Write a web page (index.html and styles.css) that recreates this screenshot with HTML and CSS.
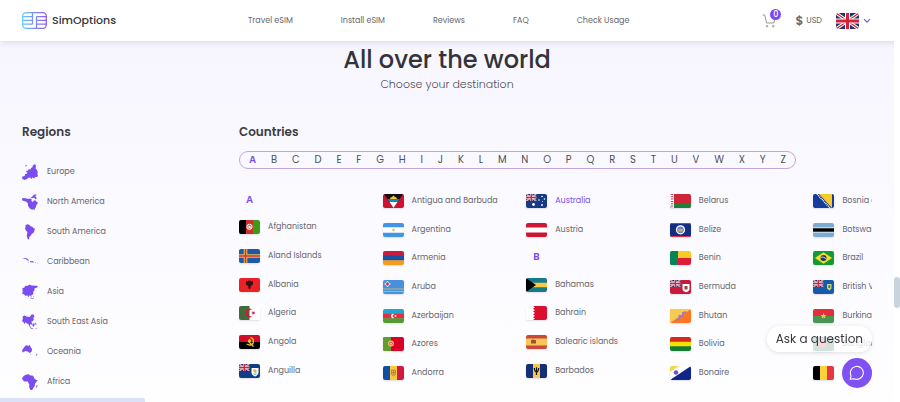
FILE: index.html
```html
<!DOCTYPE html>
<html lang="en">
<head>
    <meta charset="UTF-8">
    <meta name="viewport" content="width=device-width, initial-scale=1.0">
    <title>SimOptions - All over the world</title>
    <link rel="stylesheet" href="styles.css">
</head>
<body>
    <!-- Shared flag parts -->
    <svg class="defs" aria-hidden="true">
        <symbol id="union-jack" viewBox="0 0 60 40" preserveAspectRatio="none">
            <path fill="#26316f" d="M0 0h60v40H0z"/>
            <path stroke="#fff" stroke-width="8" d="M0 0l60 40M60 0L0 40"/>
            <path stroke="#d32238" stroke-width="3" d="M0 0l60 40M60 0L0 40"/>
            <path stroke="#fff" stroke-width="13" d="M30 0v40M0 20h60"/>
            <path stroke="#d32238" stroke-width="8" d="M30 0v40M0 20h60"/>
        </symbol>
    </svg>

    <header class="header">
        <a href="#" class="logo">
            <svg class="logo-icon" viewBox="0 0 25 17" fill="none" stroke="url(#logoGradient)" stroke-width="1.3">
                <defs>
                    <linearGradient id="logoGradient" gradientUnits="userSpaceOnUse" x1="0" y1="0" x2="25" y2="0">
                        <stop offset="0" stop-color="#5fd0f5"/>
                        <stop offset="0.5" stop-color="#7f8df0"/>
                        <stop offset="1" stop-color="#8a5cf0"/>
                    </linearGradient>
                </defs>
                <rect x="0.7" y="0.7" width="23.6" height="15.6" rx="3.5"/>
                <path d="M1 4.6h9.5M1 8.4h9.5M1 12.2h9.5M10.5 1v11.2M14.5 16V4.6M14.5 4.6H24M14.5 8.4H24M14.5 12.2H24"/>
            </svg>
            SimOptions
        </a>

        <nav class="nav">
            <a href="#">Travel eSIM</a>
            <a href="#">Install eSIM</a>
            <a href="#">Reviews</a>
            <a href="#">FAQ</a>
            <a href="#">Check Usage</a>
        </nav>

        <div class="tools">
            <a href="#" class="cart" aria-label="Cart">
                <svg viewBox="0 0 14 14" fill="none" stroke="#999" stroke-width="1">
                    <path d="M0.5 1h2.2l1.9 8h7.2l1.6-6"/>
                    <circle cx="5" cy="12.2" r="0.8"/>
                    <circle cx="11.2" cy="12.2" r="0.8"/>
                </svg>
                <span class="cart-count">0</span>
            </a>
            <button type="button" class="currency"><span class="dollar">$</span>USD</button>
            <button type="button" class="language" aria-label="Language">
                <svg class="language-flag"><use href="#union-jack"/></svg>
                <svg class="chevron" viewBox="0 0 8 6" fill="none" stroke="#7a55e0" stroke-width="1.2"><path d="M1 1.2l3 3 3-3"/></svg>
            </button>
        </div>
    </header>

    <main class="main">
        <h1>All over the world</h1>
        <p class="subtitle">Choose your destination</p>

        <div class="destinations">
            <section class="regions">
                <h2>Regions</h2>
                <ul>
                    <li><a href="#"><svg viewBox="0 0 16 16"><path d="M0 14.500l.4-2 2.300-.6.400-1.800 1.800-.4.600-1.300-1.300-.4.200-1.400 1.200.3L6.800 5l1.600.7.400-1.500 1.500-1L11.400.8l1.800-.6.8 1.800-.4 2.600 1.200 1.200 1 2.300-.4 1.800.6 2.400-1.500.8-1.400-.2-.8 1.700-1.900-1-.8 1.600-1.200-1.600-2.100.1-1.700 1.600-2.400.6zM3.300 1.600l1.400-.5v.9l-1.200.5z"/></svg>Europe</a></li>
                    <li><a href="#"><svg viewBox="0 0 16 16"><path d="M0 6.200L.4 4l2.800.3 3.400.7 1.900-.6 1.300 1-.4 1.500 1.500 1.200.9-1.500 1.500-.4 1 1.200 1.600 1-.6 1.700-.9.8-.6 2.400-1.200 1.600.1 1.300-.9-.7-2.200-.1-1.800-.9-1.700-2.600-.3-2.800-2-1.600L1.800 7zM8.600 3.400l2-1.200 1.200-1.500L14.800.3l-1.500 1.900 1.500 1.800-.9 1.400-2-1.800-1.700.6z"/></svg>North America</a></li>
                    <li><a href="#"><svg viewBox="0 0 16 16"><path d="M3.300 1.400L5.200.3l2.100.5 1.300 1.500 1.800.4.8 1.200 1.800.8-.6 2-1 2.400-1.600.7-.9 1.700-1.200 1-.6 1.300.1 1.700-1.500-.6L4.800 12l.6-4L3.600 6.200 3 4.100l.7-1z"/></svg>South America</a></li>
                    <li><a href="#"><svg viewBox="0 0 16 16"><path d="M0 5l2.400-1.100 2.700.7 2.400 1.800-1.700.1-2.300-1.600-2-.2zM7.800 7.200l2.400-.2 2 1-.8.5-2.900-.3zM13 8.300l1 .1v.5l-1-.1zM15 8.800l.9.3-.4.5zM5.600 7.800l1.200.2-.3.4z"/></svg>Caribbean</a></li>
                    <li><a href="#"><svg viewBox="0 0 16 16"><path d="M.3 4.200l2.200-.8.500-1.600 2.300.2L7.400.4l2.200 1.200 5 .1 1.400.8-1.300 1.300-2 .4-.3 2.400-1.300 1.100.4 1.800-1.200 1.600-1.200.1.700 2-1-.7-.8-1.200-.8.5-.5 1.500-1.200-1.900-2.200.3L1.600 10 .3 10.200.7 7zM8 13.500l2 .6 2 .8-1.500.1-2-.8zM11 11.700l.8 1.400-.7.1z"/></svg>Asia</a></li>
                    <li><a href="#"><svg viewBox="0 0 16 16"><path d="M.7 2.200l2-.8 1.600 1.200 3.200.3L8.700 1.800 9.700.3l1.800.2.900 1.900-1.200 1.500.7 1.600-1 1.500-1.700.7 1.200 2-.8 1-1.100-.7-.6 1 .8 2-1.200-.7-1-2.100L5 9.600 3.700 8.200 2.500 10 1.300 8 0 7l.8-2zM7 12l2.600 2 1.800.6-.1.500-2.200-.3zM10.300 10.500l2-1.500.4 1.800-1 2-1.200-.7zM12.800 8.300l1.300 1 .4 2-.9-.6zM13.200 14l1.800.8-.7.4z"/></svg>South East Asia</a></li>
                    <li><a href="#"><svg viewBox="0 0 16 16"><path d="M0 6.200l1.800-2.400 1.500-2L5.300 1.200l.8 1L7.500.8l1.300 2.700 1.400 1.700-.7 2.500-1.900 1.300-2-1.500-2.200-.6L.8 8.600zM7.700 9.800h1v.9zM14.600 9.600l1 .6-1 1.400-1.200 1 .9-1.600z"/></svg>Oceania</a></li>
                    <li><a href="#"><svg viewBox="0 0 16 16"><path d="M0 4.600L1.600 2 4.400.6 7 .3l.6 1 3.500.4 1.500 3 1.600 1.200h1.400L14 8.600l-1.200 1.500.1 1.900-1.400 1.600-1 2.100-2 .5-1.300-3 .1-2.800-1.100-1.800-.4-1.100-3.500-.1L.4 5.600zM14.800 11l.8.3-.8 2.500-.8-.2z"/></svg>Africa</a></li>
                </ul>
            </section>

            <section class="countries">
                <h2>Countries</h2>
                <div class="alphabet">
                    <button type="button" class="active">A</button><button type="button">B</button><button type="button">C</button><button type="button">D</button><button type="button">E</button><button type="button">F</button><button type="button">G</button><button type="button">H</button><button type="button">I</button><button type="button">J</button><button type="button">K</button><button type="button">L</button><button type="button">M</button><button type="button">N</button><button type="button">O</button><button type="button">P</button><button type="button">Q</button><button type="button">R</button><button type="button">S</button><button type="button">T</button><button type="button">U</button><button type="button">V</button><button type="button">W</button><button type="button">X</button><button type="button">Y</button><button type="button">Z</button>
                </div>

                <div class="list-wrap">
                    <div class="list">
                        <ul class="with-letter">
                            <li class="letter">A</li>
                            <li><a href="#"><svg viewBox="0 0 21 14"><path d="M0 0h7v14H0z"/><path fill="#c8322b" d="M7 0h7v14H7z"/><path fill="#3d9a18" d="M14 0h7v14h-7z"/><circle cx="10.500" cy="6.800" r="2.600" fill="#d66a50" stroke="#fff"/><path fill="#fff" d="M9.500 6h2v2h-2z"/></svg>Afghanistan</a></li>
                            <li><a href="#"><svg viewBox="0 0 21 14"><path fill="#1c5aa8" d="M0 0h21v14H0z"/><path stroke="#f0bd55" stroke-width="3.600" d="M6.500 0v14M0 7h21"/><path stroke="#d0342e" stroke-width="1.600" d="M6.500 0v14M0 7h21"/></svg>Aland Islands</a></li>
                            <li><a href="#"><svg viewBox="0 0 21 14"><path fill="#ec2027" d="M0 0h21v14H0z"/><path fill="#321013" d="M7 3l2 .5.8-1.200.7.800.7-.8.8 1.200L14 3v3.500l-2.500 1.700.3 1.700-1.300 1.300-1.300-1.300.3-1.700L7 6.500z"/></svg>Albania</a></li>
                            <li><a href="#"><svg viewBox="0 0 21 14"><path fill="#fff" d="M0 0h21v14H0z"/><path fill="#456b3b" d="M0 0h10.500v14H0z"/><path fill="#d8173c" d="M13.500 3.800a4.200 4.200 0 1 0 0 6.400 3.400 3.400 0 1 1 0-6.400zM12 7l1.500-.6.200-1.500 1 1.200 1.400-.5-.8 1.300.8 1.300-1.400-.4-1 1.200-.2-1.500z"/></svg>Algeria</a></li>
                            <li><a href="#"><svg viewBox="0 0 21 14"><path fill="#d50c28" d="M0 0h21v7H0z"/><path d="M0 7h21v7H0z"/><path fill="none" stroke="#f3c332" stroke-width="1.300" d="M11.500 2.500c4 1 4 7.500-.8 7.500L7.500 9M9 6l5.500 5.500"/><path fill="#f3c332" d="M10 4l2 1-.3 2-2 .3L9 5.500z"/></svg>Angola</a></li>
                            <li><a href="#"><svg viewBox="0 0 21 14"><path fill="#103d87" d="M0 0h21v14H0z"/><use href="#union-jack" width="10.500" height="7"/><path fill="#fff" d="M12.500 4h7v4.500c0 2-2 3.500-3.500 4-1.500-.5-3.500-2-3.500-4z"/><path fill="#e0b45b" d="M14 6l2-1 2 2-1 2-2-.5z"/><path fill="#72c7dc" d="M13.500 9.500h5l-2.500 2z"/></svg>Anguilla</a></li>
                        </ul>
                        <ul>
                            <li><a href="#"><svg viewBox="0 0 21 14"><path fill="#cc1230" d="M0 0h21v14H0z"/><path fill="#111" d="M1 0h19l-9.500 14z"/><path fill="#f7ca35" d="M7 5l.6-1.500L9 3l1.500-1.500L12 3l1.400.5L14 5z"/><path fill="#1684c5" d="M4.500 5h12l-2 3h-8z"/><path fill="#fff" d="M6.500 8h8l-4 6z"/></svg>Antigua and Barbuda</a></li>
                            <li><a href="#"><svg viewBox="0 0 21 14"><path fill="#4393e6" d="M0 0h21v14H0z"/><path fill="#fff" d="M0 4.300h21v5.400H0z"/><circle cx="10.500" cy="7" r="1.400" fill="#ecc65b"/></svg>Argentina</a></li>
                            <li><a href="#"><svg viewBox="0 0 21 14"><path fill="#c81b3d" d="M0 0h21v5H0z"/><path fill="#1951a6" d="M0 4.700h21v5H0z"/><path fill="#f39b21" d="M0 9.300h21V14H0z"/></svg>Armenia</a></li>
                            <li><a href="#"><svg viewBox="0 0 21 14"><path fill="#4690dc" d="M0 0h21v14H0z"/><path stroke="#bdba72" d="M0 9h21M0 11.500h21"/><path fill="#d7284b" stroke="#fff" stroke-width=".7" d="M4.500 1l1 2 2 1-2 1-1 2-1-2-2-1 2-1z"/></svg>Aruba</a></li>
                            <li><a href="#"><svg viewBox="0 0 21 14"><path fill="#24a4ce" d="M0 0h21v5H0z"/><path fill="#e22f42" d="M0 4.700h21v5H0z"/><path fill="#549b35" d="M0 9.300h21V14H0z"/><path fill="#fff" d="M11.300 5.300a2.100 2.100 0 1 0 0 3.400 1.700 1.700 0 1 1 0-3.400z"/><circle cx="12.500" cy="7" r=".9" fill="#fff"/></svg>Azerbaijan</a></li>
                            <li><a href="#"><svg viewBox="0 0 21 14"><path fill="#d80027" d="M0 0h21v14H0z"/><path fill="#639c35" d="M0 0h8v14H0z"/><circle cx="8" cy="6.500" r="2.400" fill="#d83435" stroke="#edc24f" stroke-width="1.200"/><path fill="#fff" d="M7.300 5.700h1.400v1.800H7.300z"/></svg>Azores</a></li>
                            <li><a href="#"><svg viewBox="0 0 21 14"><path fill="#134da0" d="M0 0h7v14H0z"/><path fill="#f6ca3d" d="M7 0h7v14H7z"/><path fill="#d01b3f" d="M14 0h7v14h-7z"/><path fill="#e9ae58" stroke="#b47839" stroke-width=".8" d="M8.500 4h4v4.500l-2 1.500-2-1.500zM8.500 6.500h4M10.500 4v5"/></svg>Andorra</a></li>
                        </ul>
                        <ul class="with-letter">
                            <li><a href="#" class="current"><svg viewBox="0 0 21 14"><path fill="#173a85" d="M0 0h21v14H0z"/><use href="#union-jack" width="10.500" height="7"/><g fill="#fff"><circle cx="7.500" cy="10.500" r="1.400"/><circle cx="16" cy="2.500" r=".8"/><circle cx="13" cy="6" r=".8"/><circle cx="18.500" cy="5" r=".8"/><circle cx="16.500" cy="7.500" r=".5"/><circle cx="16" cy="11" r=".9"/></g></svg>Australia</a></li>
                            <li><a href="#"><svg viewBox="0 0 21 14"><path fill="#cc1734" d="M0 0h21v14H0z"/><path fill="#fff" d="M0 4.500h21v5H0z"/></svg>Austria</a></li>
                            <li class="letter">B</li>
                            <li><a href="#"><svg viewBox="0 0 21 14"><path fill="#19798b" d="M0 0h21v14H0z"/><path fill="#f8ca45" d="M0 4.700h21v4.600H0z"/><path d="M0 0l10 7-10 7z"/></svg>Bahamas</a></li>
                            <li><a href="#"><svg viewBox="0 0 21 14"><path fill="#fff" d="M0 0h21v14H0z"/><path fill="#da0e2e" d="M21 0H7l2 1.400-2 1.400 2 1.400-2 1.400L9 7 7 8.400l2 1.400-2 1.400 2 1.400L7 14h14z"/></svg>Bahrain</a></li>
                            <li><a href="#"><svg viewBox="0 0 21 14"><path fill="#c9483c" d="M0 0h21v14H0z"/><path fill="#f8c559" d="M0 3.500h21v7H0z"/><path fill="#a44d35" d="M5 5h1l1-1 1 1h2v3.500H5z"/></svg>Balearic islands</a></li>
                            <li><a href="#"><svg viewBox="0 0 21 14"><path fill="#152f77" d="M0 0h21v14H0z"/><path fill="#f9c84a" d="M7 0h7v14H7z"/><path fill="none" stroke="#17110a" stroke-width="1.200" d="M8.300 4c.2 2 .5 4 2.200 4s2-2 2.200-4M10.500 3.300V11"/></svg>Barbados</a></li>
                        </ul>
                        <ul>
                            <li><a href="#"><svg viewBox="0 0 21 14"><path fill="#ce2638" d="M0 0h21v14H0z"/><path fill="#1d8139" d="M0 9h21v5H0z"/><path fill="#fff" d="M0 0h4v14H0z"/><path stroke="#cf3848" stroke-width="2.500" stroke-dasharray="1 1.300" d="M2 0v14"/></svg>Belarus</a></li>
                            <li><a href="#"><svg viewBox="0 0 21 14"><path fill="#172d81" d="M0 0h21v14H0z"/><path stroke="#cf3447" stroke-width="1.200" d="M0 .5h21M0 13.500h21"/><circle cx="10.500" cy="6.800" r="4" fill="#6787c2" stroke="#fff" stroke-width="1.300"/><path fill="#d4ad72" d="M8.500 6h4v2.500h-4z"/></svg>Belize</a></li>
                            <li><a href="#"><svg viewBox="0 0 21 14"><path fill="#f7cb20" d="M0 0h21v7H0z"/><path fill="#dd1c3b" d="M0 7h21v7H0z"/><path fill="#078454" d="M0 0h8v14H0z"/></svg>Benin</a></li>
                            <li><a href="#"><svg viewBox="0 0 21 14"><path fill="#c91a3c" d="M0 0h21v14H0z"/><use href="#union-jack" width="10.500" height="7"/><path fill="#fff" d="M12.500 4h7v5c0 1.500-1.500 2.500-3.500 3.300-2-.8-3.500-1.800-3.500-3.300z"/><path fill="#8a4b46" d="M14.500 6h3v3.500h-3z"/></svg>Bermuda</a></li>
                            <li><a href="#"><svg viewBox="0 0 21 14"><path fill="#ff7621" d="M0 0h21v14H0z"/><path fill="#f8ca51" d="M0 0h21L0 14z"/><path fill="none" stroke="#a67ab8" stroke-width="2" d="M6 11l3-1 .5-3 3 .5L13 4l3-1"/></svg>Bhutan</a></li>
                            <li><a href="#"><svg viewBox="0 0 21 14"><path fill="#d6281d" d="M0 0h21v5H0z"/><path fill="#f8e000" d="M0 4.700h21v5H0z"/><path fill="#147b31" d="M0 9.300h21V14H0z"/></svg>Bolivia</a></li>
                            <li><a href="#"><svg viewBox="0 0 21 14"><path fill="#fff" d="M0 0h21v14H0z"/><path fill="#10268a" d="M21 0v14H0z"/><path fill="#f4d64a" d="M0 0h9L0 6z"/><circle cx="6" cy="6.500" r="2.200" fill="#7450c8"/></svg>Bonaire</a></li>
                        </ul>
                        <ul>
                            <li><a href="#"><svg viewBox="0 0 21 14"><path fill="#163b9b" d="M0 0h21v14H0z"/><path fill="#f9ca25" d="M6 0h13v14z"/><path stroke="#fff" stroke-width="1.500" stroke-dasharray="1 .8" d="M4 0l13 14"/></svg>Bosnia and Herzegovina</a></li>
                            <li><a href="#"><svg viewBox="0 0 21 14"><path fill="#7bacd0" d="M0 0h21v14H0z"/><path fill="#fff" d="M0 4.500h21v5H0z"/><path d="M0 5.300h21v3.400H0z"/></svg>Botswana</a></li>
                            <li><a href="#"><svg viewBox="0 0 21 14"><path fill="#129a35" d="M0 0h21v14H0z"/><path fill="#f9dc21" d="M10.500 1.200L19 7l-8.500 5.800L2 7z"/><circle cx="10.500" cy="7" r="3" fill="#21366f"/><path fill="none" stroke="#fff" stroke-width=".8" d="M7.800 6.200c2-.3 4 .2 5.400 1.700"/></svg>Brazil</a></li>
                            <li><a href="#"><svg viewBox="0 0 21 14"><path fill="#145baa" d="M0 0h21v14H0z"/><use href="#union-jack" width="10.500" height="7"/><path fill="#d5d37c" d="M14 4h4.500v4.500l-2.200 2-2.300-2z"/><path fill="#398946" d="M15.300 5.300h2V8h-2z"/></svg>British Virgin Islands</a></li>
                            <li><a href="#"><svg viewBox="0 0 21 14"><path fill="#e32e3b" d="M0 0h21v7H0z"/><path fill="#4b9453" d="M0 7h21v7H0z"/><path fill="#fad344" d="M10.500 4l.8 2h2.200l-1.700 1.400.6 2.100-1.900-1.200-1.900 1.200.6-2.100L7.500 6h2.200z"/></svg>Burkina Faso</a></li>
                            <li><a href="#"><svg viewBox="0 0 21 14"><path fill="#2a6b52" d="M0 0h21v14H0z"/><circle cx="9.500" cy="7" r="4.200" fill="#e23a4c"/></svg>Bangladesh</a></li>
                            <li><a href="#"><svg viewBox="0 0 21 14"><path d="M0 0h7v14H0z"/><path fill="#f9d338" d="M7 0h7v14H7z"/><path fill="#e93444" d="M14 0h7v14h-7z"/></svg>Belgium</a></li>
                        </ul>
                    </div>
                </div>
            </section>
        </div>
    </main>

    <div class="chat">
        <span class="chat-label">Ask a question</span>
        <button type="button" class="chat-btn" aria-label="Open chat">
            <svg viewBox="0 0 16 16" fill="none" stroke="#fff" stroke-width="1.100" stroke-linejoin="round"><path d="M1.200 14.300l.9-3.400A6.500 6.500 0 1 1 5 13.700z"/></svg>
        </button>
    </div>

    <div class="scroll-track"><div class="scroll-thumb"></div></div>
    <div class="progress"></div>
</body>
</html>
```
FILE: styles.css
```css
* {
    margin: 0;
    padding: 0;
    box-sizing: border-box;
}

body {
    min-height: 100vh;
    font-family: 'Poppins', 'Inter', 'Helvetica Neue', Arial, sans-serif;
    font-size: 8px;
    color: #66666c;
    background-color: #fff;
    overflow: hidden;
}

a {
    color: inherit;
    text-decoration: none;
}

ul {
    list-style: none;
}

button {
    border: none;
    background: none;
    font: inherit;
    color: inherit;
    cursor: pointer;
}

.defs {
    position: absolute;
    width: 0;
    height: 0;
}

/* Header */
.header {
    position: relative;
    display: grid;
    grid-template-columns: 226px 1fr auto;
    align-items: center;
    height: 41px;
    padding: 0 29px 0 22px;
    background: white;
    box-shadow: 0 2px 6px rgba(40, 30, 80, 0.12);
}

.logo {
    display: flex;
    align-items: center;
    gap: 5px;
    color: #333338;
    font-size: 11px;
    font-weight: 500;
}

.logo-icon {
    width: 25px;
    height: 17px;
}

.nav {
    display: flex;
    gap: 48px;
}

.tools {
    display: flex;
    align-items: center;
}

.cart {
    position: relative;
    margin-right: 19px;
}

.cart svg {
    display: block;
    width: 14px;
    height: 14px;
}

.cart-count {
    position: absolute;
    top: -5px;
    left: 8px;
    width: 11px;
    height: 11px;
    border-radius: 50%;
    background: #7c4dee;
    color: white;
    font-weight: 500;
    line-height: 11px;
    text-align: center;
}

.currency {
    display: flex;
    align-items: center;
    gap: 3px;
    margin-right: 14px;
}

.dollar {
    font-size: 12px;
    font-weight: 600;
}

.language {
    display: flex;
    align-items: center;
    gap: 4px;
}

.language-flag {
    width: 23px;
    height: 16px;
    border-radius: 3px;
}

.chevron {
    width: 8px;
    height: 6px;
}

/* Content */
.main {
    min-height: calc(100vh - 41px);
    margin-right: 6px;
    padding: 4px 22px 0;
    background: linear-gradient(#f7f6ff, #fbfaff 50%, #fefeff);
}

h1 {
    color: #333338;
    font-size: 24px;
    font-weight: 500;
    line-height: 30px;
    text-align: center;
}

.subtitle {
    font-size: 11px;
    font-weight: 300;
    line-height: 18px;
    text-align: center;
    color: #505058;
}

.destinations {
    display: grid;
    grid-template-columns: 217px 1fr;
    margin-top: 31px;
}

h2 {
    color: #3c3c42;
    font-size: 12px;
    font-weight: 600;
    line-height: 16px;
}

.regions ul {
    margin-top: 17px;
}

.regions a {
    display: flex;
    align-items: center;
    gap: 9px;
    height: 30px;
}

.regions svg {
    width: 16px;
    height: 16px;
    fill: #7c4dee;
}

.countries {
    min-width: 0;
}

.alphabet {
    display: flex;
    justify-content: space-between;
    align-items: center;
    width: 88%;
    height: 18px;
    margin-top: 11px;
    padding: 0 9px;
    border: 1px solid #c3a5dc;
    border-radius: 9px;
    color: #505056;
    font-size: 10px;
}

.alphabet .active {
    color: #7c4dee;
    font-weight: 600;
}

.list-wrap {
    margin-top: 18px;
    overflow: hidden;
}

.list {
    display: grid;
    grid-template-columns: repeat(5, 1fr);
    width: 718px;
}

.list ul {
    display: flex;
    flex-direction: column;
    height: 200px;
}

.list .with-letter {
    height: 198px;
}

.list li {
    flex: 1;
    display: flex;
    align-items: center;
    white-space: nowrap;
}

.list .letter {
    flex: 0 0 26px;
    padding-left: 7px;
    color: #7c4dee;
    font-size: 10px;
    font-weight: 600;
}

.list a {
    display: flex;
    align-items: center;
    gap: 8px;
}

.list svg {
    width: 21px;
    height: 14px;
    border-radius: 2px;
    box-shadow: 0 1px 2px rgba(0, 0, 0, 0.12);
}

.list .current {
    color: #7c4dee;
}

/* Chat widget */
.chat {
    position: fixed;
    right: 28px;
    bottom: 14px;
    display: flex;
    flex-direction: column;
    align-items: flex-end;
    gap: 6px;
}

.chat-label {
    padding: 0 9px;
    border-radius: 13px;
    background: rgba(255, 255, 255, 0.8);
    box-shadow: 0 1px 5px rgba(0, 0, 0, 0.12);
    color: #38383e;
    font-size: 12px;
    line-height: 26px;
}

.chat-btn {
    display: flex;
    align-items: center;
    justify-content: center;
    width: 30px;
    height: 30px;
    border-radius: 50%;
    background: #7f50f2;
}

.chat-btn svg {
    width: 16px;
    height: 16px;
}

/* Scrollbar and progress */
.scroll-track {
    position: fixed;
    top: 41px;
    right: 0;
    bottom: 0;
    width: 6px;
    background: white;
}

.scroll-thumb {
    height: 31px;
    margin-top: 236px;
    border-radius: 3px;
    background: #c9d3de;
}

.progress {
    position: fixed;
    left: 0;
    bottom: 0;
    width: 145px;
    height: 4px;
    border-radius: 0 2px 0 0;
    background: #dce1f7;
}
```
